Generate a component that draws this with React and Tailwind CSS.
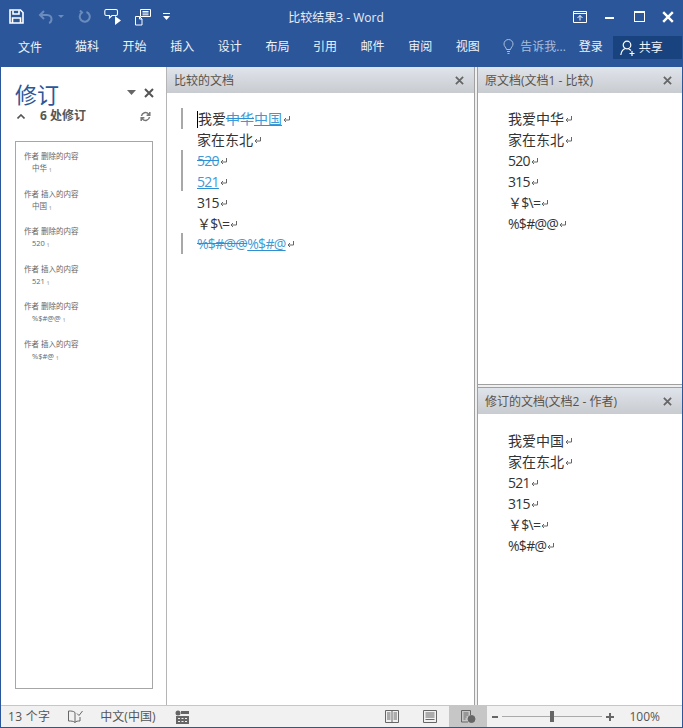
import React from "react";

const tabs = ["猫科", "开始", "插入", "设计", "布局", "引用", "邮件", "审阅", "视图"];

const revisions = [
  ["作者 删除的内容", "中华"],
  ["作者 插入的内容", "中国"],
  ["作者 删除的内容", "520"],
  ["作者 插入的内容", "521"],
  ["作者 删除的内容", "%$#@@"],
  ["作者 插入的内容", "%$#@"],
];

const Mark = () => (
  <svg width="9" height="8" viewBox="0 0 9 8" className="inline-block shrink-0" fill="none" stroke="#666" strokeWidth="1">
    <path d="M7.500 1v4H2M4 3L2 5l2 2" />
  </svg>
);

const CloseX = ({ size = 9, color = "#666", width = 2 }) => (
  <svg width={size} height={size} viewBox="0 0 10 10" fill="none" stroke={color} strokeWidth={width}>
    <path d="M1 1l8 8M9 1l-8 8" />
  </svg>
);

const PaneHeader = ({ title, pl = "pl-[7px]", pr = "pr-[10px]" }) => (
  <div className={`h-[26px] shrink-0 flex items-center justify-between pt-[1px] ${pl} ${pr} bg-gradient-to-b from-[#e0e4eb] to-[#c8cbd0] text-[12px] text-[#5a5248]`}>
    <span>{title}</span>
    <CloseX />
  </div>
);

const DocLines = ({ lines }) => (
  <div className="pl-[30px] text-[14px] text-[#333]">
    {lines.map((l) => (
      <div key={l} className="h-[20.85px] flex items-center leading-none pt-[2px] tracking-[-0.7px]">
        <span className={/[我家]/.test(l) ? "tracking-normal" : ""}>{l}</span>
        <Mark />
      </div>
    ))}
  </div>
);

const Ins = ({ children }) => <span className="text-[#3e9ad6] underline decoration-[#2f8fd0]">{children}</span>;
const Del = ({ children }) => <span className="text-[#3e9ad6] line-through decoration-[#2f8fd0]">{children}</span>;

const CompareRow = ({ bar, latin, children }) => (
  <div className="h-[20.85px] flex items-center">
    <div className={`w-[2px] h-full ml-[14px] mr-[14px] ${bar ? "bg-[#a8a8a8]" : ""}`}></div>
    <div className={`flex items-center pt-[2px] text-[14px] text-[#333] leading-none ${latin ? "tracking-[-0.7px]" : ""}`}>{children}</div>
  </div>
);

export default function App() {
  return (
    <div className="w-[683px] h-[728px] flex flex-col bg-[#2b579a] font-['Open_Sans','Noto_Sans_CJK_SC',sans-serif] overflow-hidden">
      {/* title bar */}
      <div className="h-[33px] shrink-0 flex items-center text-white">
        <svg width="15" height="15" viewBox="0 0 15 15" className="ml-[9px]" fill="none" stroke="#fff" strokeWidth="1.6">
          <path d="M1 1h10.500L14 3.500V14H1z" />
          <path d="M4 1.500v3.500h6V1.500M3.500 14V9h8v5" />
        </svg>
        <svg width="16" height="14" viewBox="0 0 16 14" className="ml-[14px]" fill="none" stroke="#6b8bbd" strokeWidth="2">
          <path d="M6 1L2 5l4 4M2 5h7c3 0 4.500 2 4.500 4s-1 3.500-2.500 4" />
        </svg>
        <svg width="6" height="3" viewBox="0 0 6 3" className="ml-[4px]" fill="#6b8bbd"><path d="M0 0h6L3 3z" /></svg>
        <svg width="14" height="14" viewBox="0 0 14 14" className="ml-[13px]" fill="none" stroke="#6b8bbd" strokeWidth="2">
          <path d="M5 2.500a5 5 0 1 0 4.500-.5M3 0.500l2 2-2 2" />
        </svg>
        <svg width="18" height="18" viewBox="0 0 18 18" className="ml-[13px]" fill="none" stroke="#fff" strokeWidth="1.100">
          <path d="M2 1.500h10a1.500 1.500 0 0 1 1.500 1.500v3a1.500 1.500 0 0 1-1.500 1.500H8L5.500 10V7.500H2A1.500 1.500 0 0 1 .8 6V3A1.500 1.500 0 0 1 2 1.500z" />
          <path d="M11 8l6 4.500-6 4.500z" fill="#fff" stroke="none" />
        </svg>
        <svg width="18" height="18" viewBox="0 0 18 18" className="ml-[12px]" fill="none" stroke="#fff" strokeWidth="1">
          <path d="M6.500 1.500h10v7h-10zM8.500 3.500h6M8.500 5h6M8.500 6.800h6" />
          <path d="M1.500 8.500h4l2.500 2.500v6H1.500zM5.500 8.500V11H8" />
        </svg>
        <svg width="7" height="7" viewBox="0 0 7 7" className="ml-[11px]" fill="#fff">
          <path d="M0 0h7v1H0zM0 3h7L3.500 7z" />
        </svg>
        <div className="flex-1 text-center text-[12px] text-[#e8eef7] pr-[71px] mt-[3px]">比较结果3 - Word</div>
        <svg width="14" height="12" viewBox="0 0 14 12" fill="none" stroke="#fff" strokeWidth="1">
          <path d="M.5 .5h13v11H.5zM.5 2.500h13" />
          <path d="M7 9.500V4.500M4.500 7L7 4.500 9.500 7" />
        </svg>
        <div className="w-[9px] h-[2px] bg-white ml-[18px] mt-[3px]"></div>
        <div className="w-[11px] h-[11px] border border-white border-t-2 ml-[20px]"></div>
        <div className="ml-[17px] mr-[9px]"><CloseX size={12} color="#fff" /></div>
      </div>

      {/* ribbon tabs */}
      <div className="h-[34px] shrink-0 flex items-start pt-[3px] text-[12px] text-[#eef2f8] leading-none">
        <span className="ml-[18px] mt-[6px]">文件</span>
        <div className="flex ml-[33px] mt-[5px]">
          {tabs.map((t) => (
            <span key={t} className="w-[47.600px]">{t}</span>
          ))}
        </div>
        <svg width="11" height="15" viewBox="0 0 11 15" className="mt-[3px]" fill="none" stroke="#a9bedb" strokeWidth="1">
          <path d="M3.500 10.500C3 8 1 7.500 1 5a4.500 4.500 0 0 1 9 0c0 2.500-2 3-2.500 5.500zM4 12.500h3M4.500 14.500h2" />
        </svg>
        <span className="ml-[6px] mt-[5px] text-[#a9bedb]">告诉我...</span>
        <span className="ml-[13px] mt-[5px]">登录</span>
        <div className="ml-[10px] w-[69px] h-[23px] bg-[#19437f] flex items-center">
          <svg width="16" height="16" viewBox="0 0 16 16" className="ml-[7px]" fill="none" stroke="#fff" strokeWidth="1.200">
            <circle cx="7" cy="5" r="3.800" />
            <path d="M.8 15c.5-3.500 2.500-6 4.700-6.500M8.500 9c1 .2 2 1 2.500 1.500M12 11v5M9.500 13.500h5" />
          </svg>
          <span className="ml-[3px]">共享</span>
        </div>
      </div>

      {/* body */}
      <div className="flex-1 min-h-0 flex ml-[1px] mr-[1px] bg-white">
        {/* revisions panel */}
        <div className="w-[166px] shrink-0 border-r border-[#b5b5b5] flex flex-col">
          <div className="flex items-center h-[37px] pt-[16px] pl-[14px]">
            <span className="text-[22px] leading-none text-[#2b579a] mt-[1px]">修订</span>
            <svg width="9" height="5" viewBox="0 0 9 5" className="ml-[68px] mt-[-2px]" fill="#666"><path d="M0 0h9L4.500 5z" /></svg>
            <div className="ml-[8px] mt-[-2px]"><CloseX size={10} color="#555" /></div>
          </div>
          <div className="flex items-center h-[22px] mt-[1px] text-[12px] font-bold text-[#555] leading-none">
            <svg width="8" height="5" viewBox="0 0 8 5" className="ml-[16px]" fill="none" stroke="#555" strokeWidth="1.600"><path d="M.5 4.500L4 1l3.500 3.500" /></svg>
            <span className="ml-[15px]">6 处修订</span>
            <svg width="11" height="11" viewBox="0 0 11 11" className="ml-[54px]" fill="none" stroke="#777" strokeWidth="1.500">
              <path d="M1.500 5a4 4 0 0 1 7-2l1 1M9.500 6a4 4 0 0 1-7 2l-1-1M9.800 1v3.200H6.600M1.200 10V6.800h3.200" />
            </svg>
          </div>
          <div className="ml-[14px] mr-[13px] mt-[14px] mb-[16px] flex-1 border border-[#a6a6a6] pl-[8px] pt-[8px] text-[7.500px] leading-[12px] text-[#666]">
            {revisions.map(([who, what], i) => (
              <div key={i} className="h-[37.600px]">
                <div>{who}</div>
                <div className="ml-[8px]">{what}<span className="text-[#999]"> ₁</span></div>
              </div>
            ))}
          </div>
        </div>

        {/* compared doc */}
        <div className="w-[307px] shrink-0 flex flex-col">
          <PaneHeader title="比较的文档" />
          <div className="pt-[15px]">
            <CompareRow bar>
              <span className="border-l border-black h-[17px] flex items-center">我爱</span>
              <Del>中华</Del>
              <Ins>中国</Ins>
              <Mark />
            </CompareRow>
            <CompareRow>家在东北<Mark /></CompareRow>
            <CompareRow bar latin><Del>520</Del><Mark /></CompareRow>
            <CompareRow bar latin><Ins>521</Ins><Mark /></CompareRow>
            <CompareRow latin>315<Mark /></CompareRow>
            <CompareRow latin>￥$\=<Mark /></CompareRow>
            <CompareRow bar latin><Del>%$#@@</Del><Ins>%$#@</Ins><Mark /></CompareRow>
          </div>
        </div>

        {/* splitter */}
        <div className="w-[4px] shrink-0 border-x border-[#a0a0a0] bg-[#f0f0f0]"></div>

        {/* source docs */}
        <div className="flex-1 min-w-0 flex flex-col">
          <div className="h-[317px] shrink-0 flex flex-col">
            <PaneHeader title="原文档(文档1 - 比较)" />
            <div className="pt-[15px]">
              <DocLines lines={["我爱中华", "家在东北", "520", "315", "￥$\\=", "%$#@@"]} />
            </div>
          </div>
          <div className="h-[4px] shrink-0 border-y border-[#a0a0a0] bg-[#f0f0f0]"></div>
          <div className="flex-1 flex flex-col">
            <PaneHeader title="修订的文档(文档2 - 作者)" />
            <div className="pt-[16px]">
              <DocLines lines={["我爱中国", "家在东北", "521", "315", "￥$\\=", "%$#@"]} />
            </div>
          </div>
        </div>
      </div>

      {/* status bar */}
      <div className="h-[22px] shrink-0 mx-[1px] mb-[1px] bg-[#f1f1f1] border-t border-[#c6c6c6] flex items-center text-[12px] text-[#555] leading-none">
        <span className="ml-[7px] tracking-[0.3px]">13 个字</span>
        <svg width="15" height="14" viewBox="0 0 15 14" className="ml-[18px]" fill="none" stroke="#666" strokeWidth="1">
          <path d="M7 2.500C5.500 1 3 1 .5 1v10c2.500 0 5 0 6.500 1.500 1-1.500 3-1.500 5-1.500V7M7 2.500v10M9 3.500l2 2 3.500-4.500" />
        </svg>
        <span className="ml-[17px]">中文(中国)</span>
        <svg width="14" height="14" viewBox="0 0 14 14" className="ml-[20px]" fill="#666">
          <circle cx="3" cy="3" r="2.500" />
          <path d="M6 1h8v3H6zM1 6h13v8H1z" />
          <path d="M3 8h2v1H3zM6.500 8h2v1h-2zM10 8h2v1h-2zM3 11h2v1H3zM6.500 11h2v1h-2zM10 11h2v1h-2z" fill="#f1f1f1" />
        </svg>
        <svg width="14" height="13" viewBox="0 0 14 13" className="ml-[196px]" fill="none" stroke="#666" strokeWidth="1">
          <path d="M.5 .5h13v12H.5zM7 .5v12M2 3h3.500M2 5h3.500M2 7h3.500M2 9h3.500M8.500 3H12M8.500 5H12M8.500 7H12M8.500 9H12" />
        </svg>
        <svg width="14" height="13" viewBox="0 0 14 13" className="ml-[24px]" fill="none" stroke="#666" strokeWidth="1">
          <path d="M.5 .5h13v12H.5zM2.500 3h9M2.500 5h9M2.500 7h9M2.500 9.500h9" />
        </svg>
        <div className="ml-[12px] w-[38px] h-full bg-[#c6c6c6] flex items-center justify-center">
          <svg width="15" height="13" viewBox="0 0 15 13" fill="none" stroke="#666" strokeWidth="1">
            <path d="M7 12H.5V.5h9V5M2.500 3h5M2.500 5h5M2.500 7h3M2.500 9h2" />
            <circle cx="10.500" cy="9" r="3.500" fill="#666" />
          </svg>
        </div>
        <div className="ml-[5px] w-[6px] h-[2px] bg-[#666]"></div>
        <div className="ml-[4px] w-[100px] h-[1px] bg-[#aaa] flex items-center">
          <div className="ml-[48px] w-[4px] h-[11px] bg-[#666]"></div>
        </div>
        <svg width="8" height="8" viewBox="0 0 8 8" className="ml-[4px]" fill="#666"><path d="M3 0h2v3h3v2H5v3H3V5H0V3h3z" /></svg>
        <span className="ml-[15px]">100%</span>
      </div>
    </div>
  );
}
